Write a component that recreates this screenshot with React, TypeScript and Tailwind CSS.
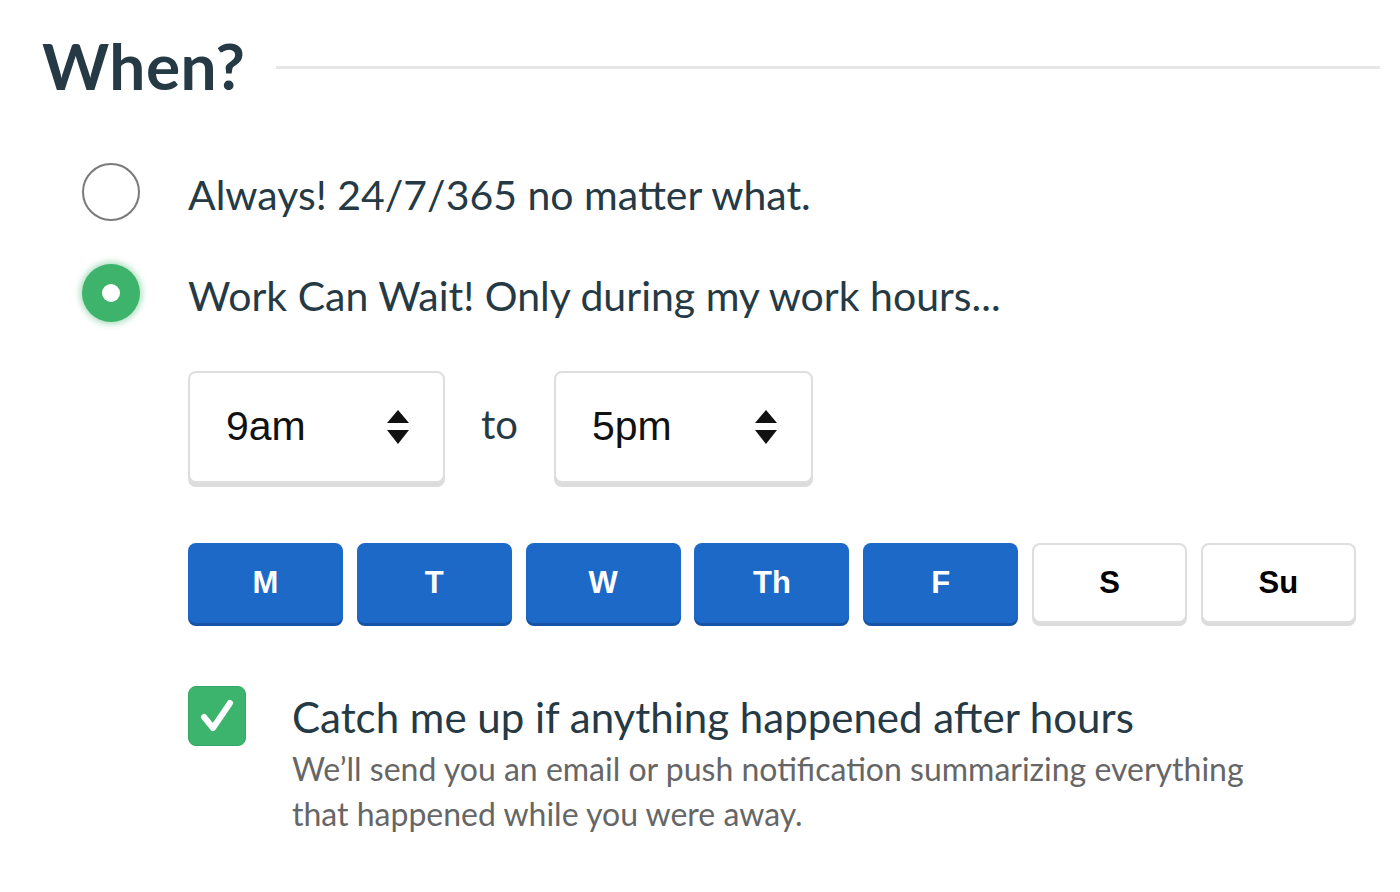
import { JSX } from "react";

const days = [
  { label: "M", on: true },
  { label: "T", on: true },
  { label: "W", on: true },
  { label: "Th", on: true },
  { label: "F", on: true },
  { label: "S", on: false },
  { label: "Su", on: false },
];

function Arrows(): JSX.Element {
  return (
    <svg width="22" height="34" viewBox="0 0 22 34" className="shrink-0">
      <path d="M11 0 L22 13 L0 13 Z" fill="#111" />
      <path d="M0 20 L22 20 L11 34 Z" fill="#111" />
    </svg>
  );
}

function TimeSelect({ value, width }: { value: string; width: string }) {
  return (
    <div
      className={`${width} flex h-[112px] items-center justify-between rounded-lg border-2 border-[#dedede] bg-white pl-[36px] pr-[34px] shadow-[0_4px_0_#dcdcdc]`}
    >
      <span className="font-['Liberation_Sans',sans-serif] text-[41px] text-[#111]">
        {value}
      </span>
      <Arrows />
    </div>
  );
}

export default function App() {
  return (
    <div className="min-h-screen bg-white pl-[42px] pr-[20px] pt-[34px] font-['Lato',sans-serif] text-[#253a44]">
      <div className="flex h-[64px] items-center">
        <h1 className="text-[64px] font-bold leading-none tracking-[0.5px]">When?</h1>
        <div className="ml-[30px] mt-[2px] h-[3px] flex-1 bg-[#e6e6e6]" />
      </div>

      <div className="mt-[65px] flex flex-col gap-[43px] pl-[40px]">
        <label className="flex h-[58px] items-center gap-[48px]">
          <span className="h-[58px] w-[58px] rounded-full border-2 border-[#7a7a7a] bg-white" />
          <span className="pt-[4px] text-[41px] leading-none">Always! 24/7/365 no matter what.</span>
        </label>
        <label className="flex h-[58px] items-center gap-[48px]">
          <span className="flex h-[58px] w-[58px] items-center justify-center rounded-full bg-[#3db36b] shadow-[0_0_6px_2px_rgba(61,179,107,0.45)]">
            <span className="h-[18px] w-[18px] rounded-full bg-white" />
          </span>
          <span className="pt-[4px] text-[41px] leading-none">Work Can Wait! Only during my work hours...</span>
        </label>
      </div>

      <div className="pl-[146px]">
        <div className="mt-[49px] flex items-center">
          <TimeSelect value="9am" width="w-[257px]" />
          <span className="mx-[36px] mb-[6px] text-[40px] leading-none">to</span>
          <TimeSelect value="5pm" width="w-[259px]" />
        </div>

        <div className="mt-[60px] flex gap-[13.8px]">
          {days.map((d) => (
            <button
              key={d.label}
              className={
                d.on
                  ? "h-[80px] w-[155px] rounded-lg bg-[#1c69c8] font-['Liberation_Sans',sans-serif] text-[31px] font-bold text-white shadow-[0_3px_0_#1553a6]"
                  : "h-[80px] w-[155px] rounded-lg border-2 border-[#dedede] bg-white font-['Liberation_Sans',sans-serif] text-[31px] font-bold text-black shadow-[0_3px_0_#dcdcdc]"
              }
            >
              {d.label}
            </button>
          ))}
        </div>

        <div className="mt-[63px] flex gap-[46px]">
          <span className="flex h-[60px] w-[58px] shrink-0 items-center justify-center rounded-lg border border-[#34a862] bg-[#3cb46d]">
            <svg width="38" height="38" viewBox="0 0 38 38">
              <path
                d="M6 20 L15 31 L32 6"
                fill="none"
                stroke="#fff"
                strokeWidth="6"
                strokeLinecap="round"
                strokeLinejoin="round"
              />
            </svg>
          </span>
          <div className="pt-[6px]">
            <div className="text-[42px] leading-[50px]">Catch me up if anything happened after hours</div>
            <p className="mt-[4px] text-[32px] leading-[45px] text-[#666]">
              We’ll send you an email or push notification summarizing everything
              <br />
              that happened while you were away.
            </p>
          </div>
        </div>
      </div>
    </div>
  );
}
